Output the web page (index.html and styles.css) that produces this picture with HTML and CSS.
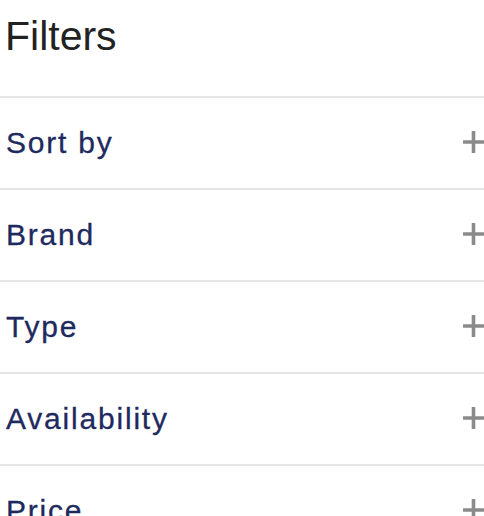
FILE: index.html
```html
<!DOCTYPE html>
<html>
<head>
<meta charset="utf-8">
<link rel="stylesheet" href="styles.css">
</head>
<body>
<div class="filters">
  <h2 class="title">Filters</h2>
  <div class="row"><span class="label">Sort by</span><svg class="plus" viewBox="0 0 21 22"><path d="M10.5 0V22M0 11H21"/></svg></div>
  <div class="row"><span class="label">Brand</span><svg class="plus" viewBox="0 0 21 22"><path d="M10.5 0V22M0 11H21"/></svg></div>
  <div class="row"><span class="label">Type</span><svg class="plus" viewBox="0 0 21 22"><path d="M10.5 0V22M0 11H21"/></svg></div>
  <div class="row"><span class="label">Availability</span><svg class="plus" viewBox="0 0 21 22"><path d="M10.5 0V22M0 11H21"/></svg></div>
  <div class="row"><span class="label">Price</span><svg class="plus" viewBox="0 0 21 22"><path d="M10.5 0V22M0 11H21"/></svg></div>
</div>
</body>
</html>
```
FILE: styles.css
```css
html, body {
  margin: 0;
  padding: 0;
  background: #ffffff;
  overflow: hidden;
}
.filters {
  font-family: "Liberation Sans", Arial, sans-serif;
  width: 484px;
}
.title {
  margin: 0;
  padding: 13px 0 36px 5px;
  font-size: 41px;
  font-weight: normal;
  line-height: 47px;
  color: #222222;
  border-bottom: 2px solid #e6e6e6;
}
.row {
  display: flex;
  align-items: center;
  justify-content: space-between;
  height: 90px;
  padding-left: 6px;
  border-bottom: 2px solid #e6e6e6;
}
.label {
  font-size: 30px;
  letter-spacing: 1.8px;
  color: #1e2a5e;
  -webkit-text-stroke: 0.3px #1e2a5e;
}
.plus {
  width: 21px;
  height: 22px;
  flex: none;
  margin-top: -2px;
}
.plus path {
  stroke: #8a8a8a;
  stroke-width: 3.6;
  fill: none;
}
```
